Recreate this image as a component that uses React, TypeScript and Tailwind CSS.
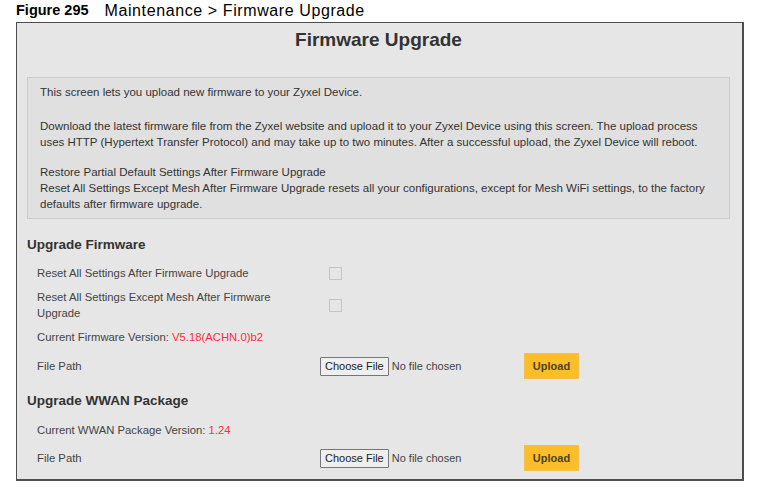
import React from "react";

const F = { fontFamily: '"Liberation Sans", Arial, sans-serif' };

function FileRow() {
  return (
    <div className="flex items-center">
      <div className="w-[204px] flex items-center">
        <div className="h-[19px] px-[4px] border border-[#767676] bg-[#efefef] rounded-[1px] text-[11px] text-[#222] flex items-center">
          Choose File
        </div>
        <span className="ml-[3px] text-[11px] text-[#444]">No file chosen</span>
      </div>
      <div className="w-[55px] h-[26px] bg-[#fcbd2a] border border-[#f5c04a] flex items-center justify-center text-[11px] font-bold text-[#4a4420]">
        Upload
      </div>
    </div>
  );
}

export default function App() {
  return (
    <div className="w-[777px] h-[502px] bg-white" style={F}>
      <div className="h-[22px] pl-[16px] flex items-center text-black">
        <span className="text-[14.5px] font-bold">Figure 295</span>
        <span className="ml-[16px] text-[16px] tracking-[0.6px]">Maintenance &gt; Firmware Upgrade</span>
      </div>
      <div className="ml-[16px] w-[728px] h-[459px] border border-[#4d4d4d] border-r-2 border-b-2 bg-[#e6e6e6] pl-[10px] pr-[12px] flex flex-col">
        <div className="h-[34px] flex items-center justify-center text-[19px] font-bold text-[#333]">
          Firmware Upgrade
        </div>
        <div className="mt-[20px] border border-[#cccccc] bg-[#e0e0e0] pl-[12px] pr-[10px] py-[6px] text-[11.5px] leading-[16px] text-[#333]">
          <p>This screen lets you upload new firmware to your Zyxel Device.</p>
          <p className="mt-[18px]">
            Download the latest firmware file from the Zyxel website and upload it to your Zyxel Device using this screen. The upload process uses HTTP (Hypertext Transfer Protocol) and may take up to two minutes. After a successful upload, the Zyxel Device will reboot.
          </p>
          <p className="mt-[14px]">Restore Partial Default Settings After Firmware Upgrade</p>
          <p>
            Reset All Settings Except Mesh After Firmware Upgrade resets all your configurations, except for Mesh WiFi settings, to the factory defaults after firmware upgrade.
          </p>
        </div>

        <div className="mt-[16px] h-[20px] flex items-center text-[13.5px] font-bold text-[#333]">
          Upgrade Firmware
        </div>

        <div className="pl-[10px] text-[11.3px] text-[#444] flex flex-col">
          <div className="mt-[8px] h-[20px] flex items-center">
            <div className="w-[283px]">Reset All Settings After Firmware Upgrade</div>
            <div className="ml-[9px] w-[13px] h-[13px] border border-[#c4c4c4] bg-[#e6e6e6]" />
          </div>
          <div className="mt-[6px] h-[32px] flex items-center">
            <div className="w-[283px] leading-[16px]">
              Reset All Settings Except Mesh After Firmware
              <br />
              Upgrade
            </div>
            <div className="ml-[9px] w-[13px] h-[13px] border border-[#c4c4c4] bg-[#e6e6e6]" />
          </div>
          <div className="mt-[6px] h-[20px] flex items-center">
            Current Firmware Version:&nbsp;<span className="text-[#ff2d3c]">V5.18(ACHN.0)b2</span>
          </div>
          <div className="mt-[6px] h-[26px] flex items-center">
            <div className="w-[283px]">File Path</div>
            <FileRow />
          </div>
        </div>

        <div className="mt-[12px] h-[20px] flex items-center text-[13.5px] font-bold text-[#333]">
          Upgrade WWAN Package
        </div>

        <div className="pl-[10px] text-[11.3px] text-[#444] flex flex-col">
          <div className="mt-[9px] h-[20px] flex items-center">
            Current WWAN Package Version:&nbsp;<span className="text-[#ff2d3c]">1.24</span>
          </div>
          <div className="mt-[5px] h-[26px] flex items-center">
            <div className="w-[283px]">File Path</div>
            <FileRow />
          </div>
        </div>
      </div>
    </div>
  );
}
